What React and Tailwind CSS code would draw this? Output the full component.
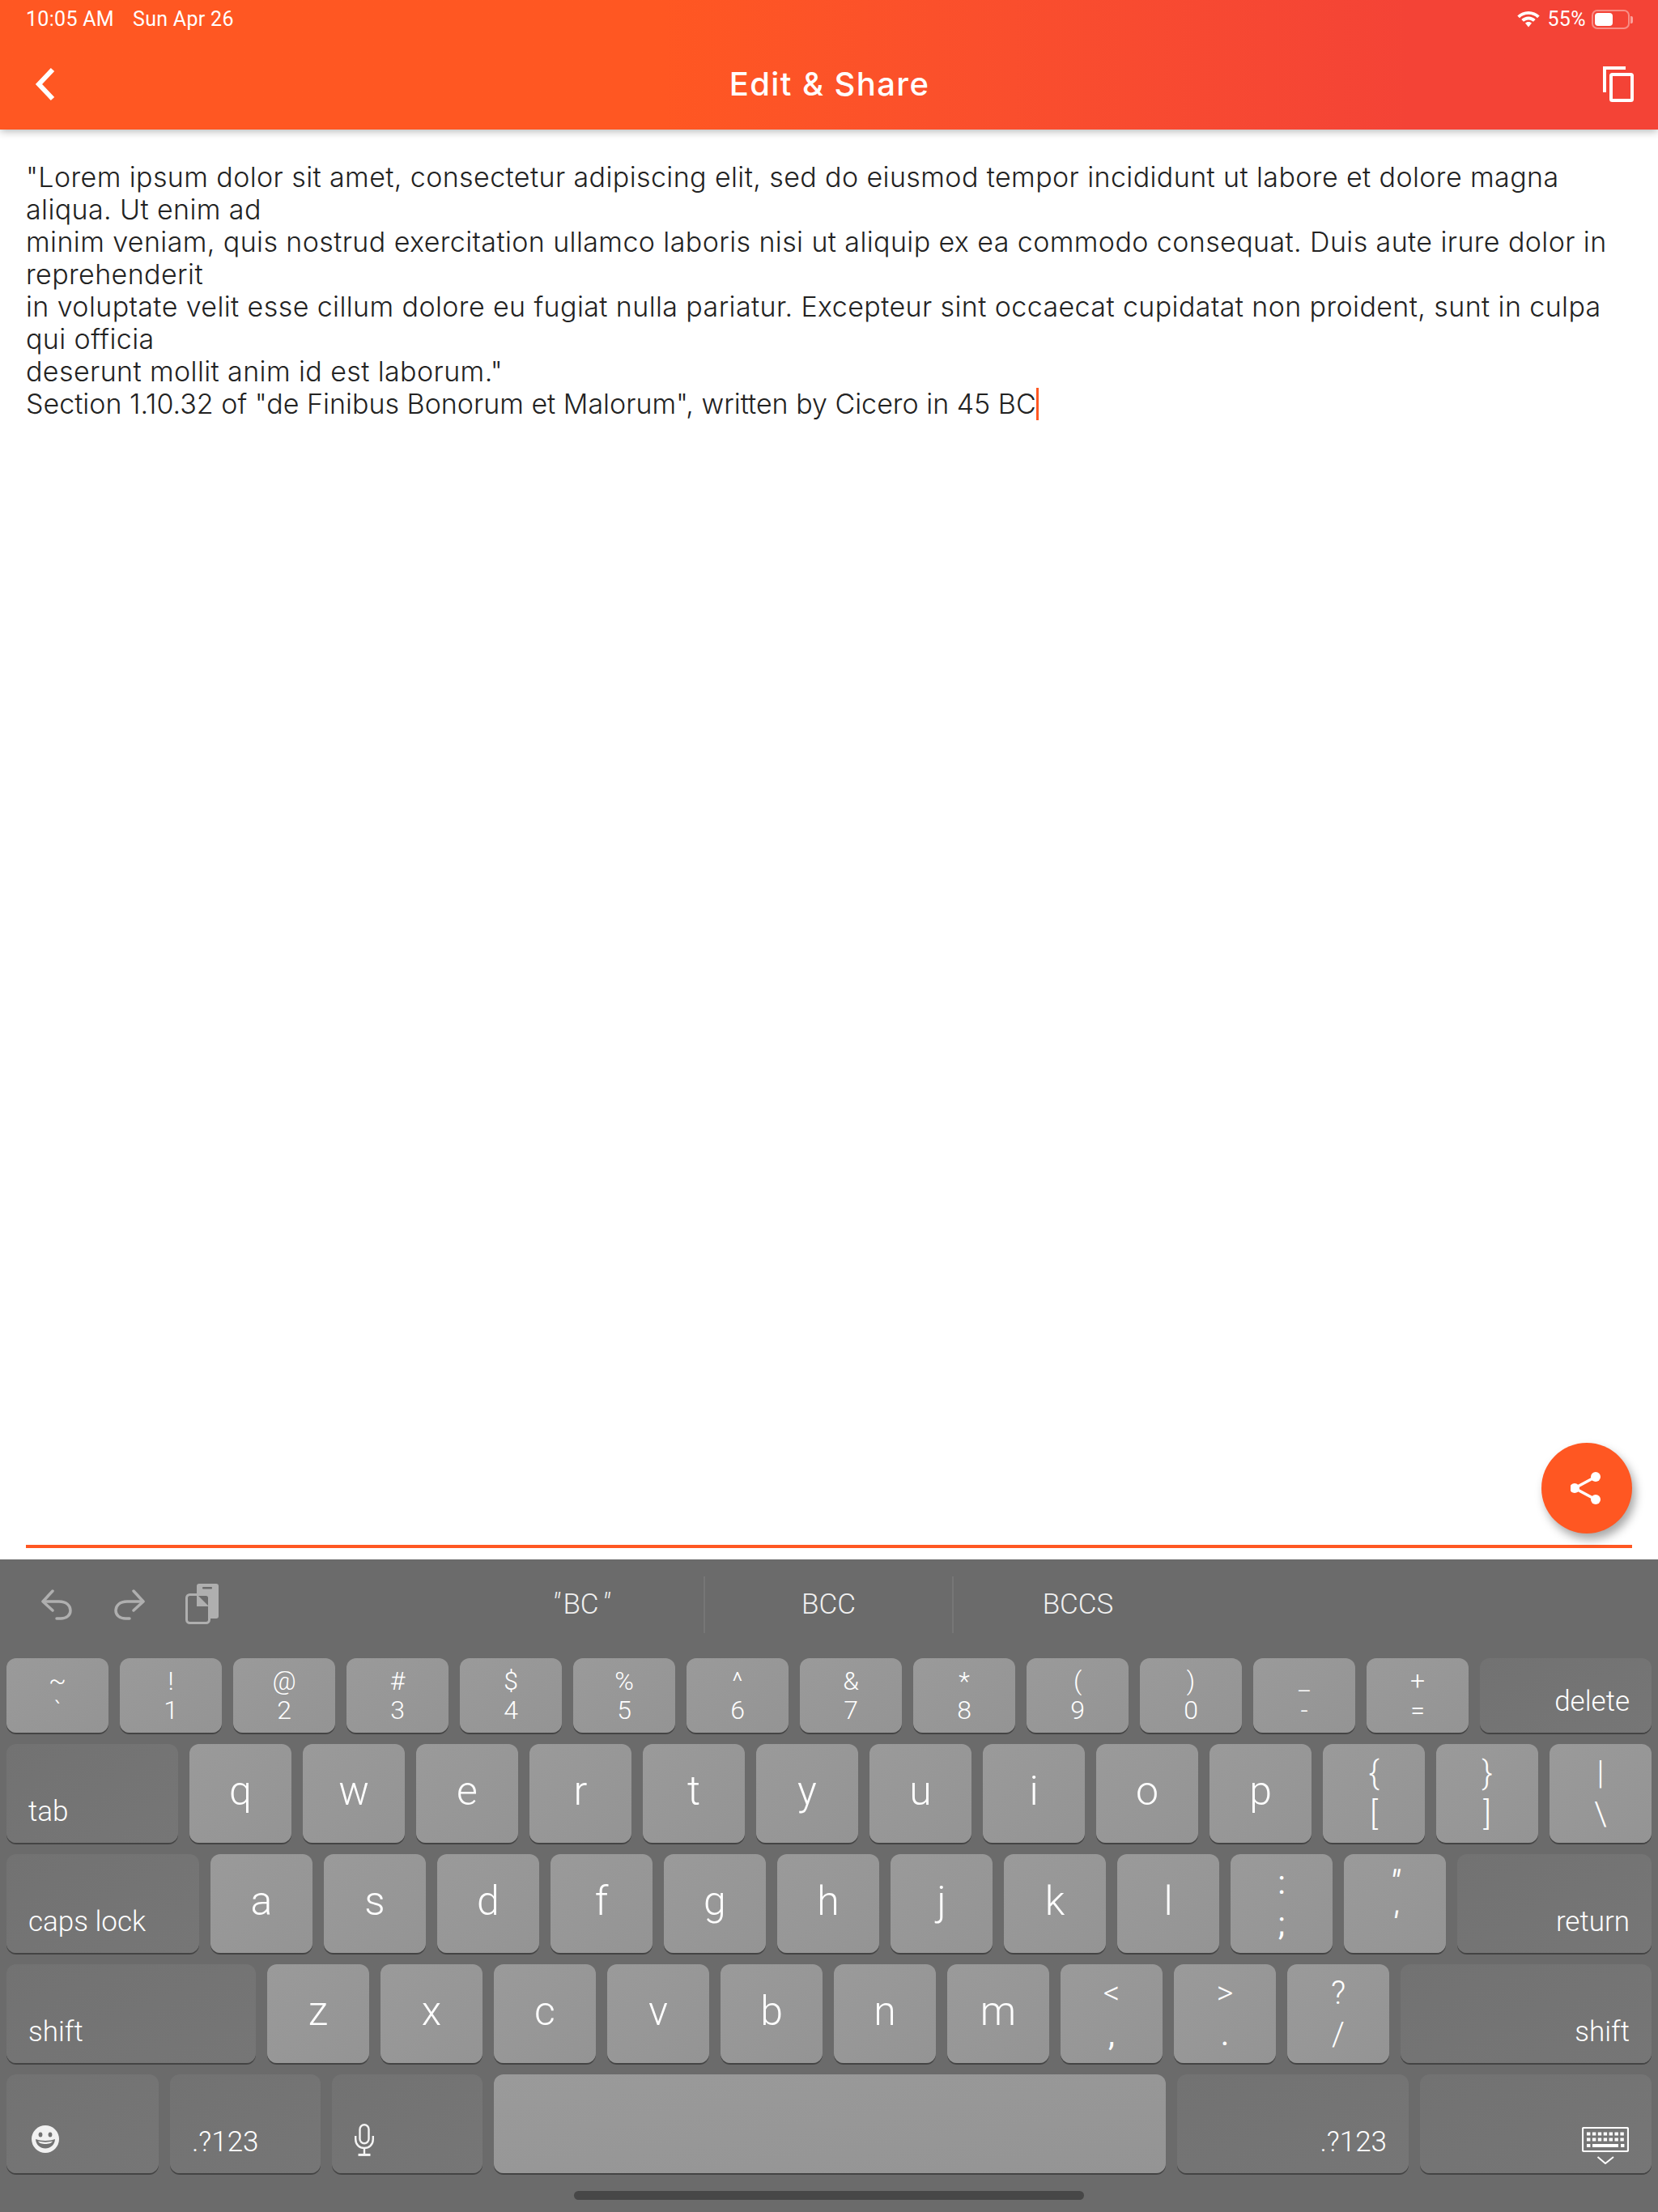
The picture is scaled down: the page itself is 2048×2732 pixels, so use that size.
import React from "react";

const lines = [
  '"Lorem ipsum dolor sit amet, consectetur adipiscing elit, sed do eiusmod tempor incididunt ut labore et dolore magna',
  "aliqua. Ut enim ad",
  "minim veniam, quis nostrud exercitation ullamco laboris nisi ut aliquip ex ea commodo consequat. Duis aute irure dolor in",
  "reprehenderit",
  "in voluptate velit esse cillum dolore eu fugiat nulla pariatur. Excepteur sint occaecat cupidatat non proident, sunt in culpa",
  "qui officia",
  'deserunt mollit anim id est laborum."',
];

function Dual({ top, bottom, small }) {
  return (
    <div className={small
      ? "w-[126px] h-[92px] shrink-0 rounded-[12px] bg-gradient-to-br from-[#9a9a9a] to-[#949494] shadow-[0_2px_0_#444444] flex flex-col items-center justify-center text-[32px] leading-[36px] font-light text-white"
      : "w-[126px] h-[122px] shrink-0 rounded-[12px] bg-gradient-to-br from-[#9a9a9a] to-[#949494] shadow-[0_2px_0_#444444] flex flex-col items-center justify-center text-[40px] leading-[51px] font-light text-white"}>
      <span>{top}</span>
      <span>{bottom}</span>
    </div>
  );
}

function Letter({ c }) {
  return (
    <div className="w-[126px] h-[122px] shrink-0 rounded-[12px] bg-gradient-to-br from-[#9a9a9a] to-[#949494] shadow-[0_2px_0_#444444] flex items-center justify-center pb-[5px] text-[50px] font-light text-white">
      {c}
    </div>
  );
}

const darkKey = "h-[122px] shrink-0 rounded-[12px] bg-gradient-to-br from-[#727272] to-[#767676] shadow-[0_2px_0_#444444] flex items-end px-[27px] pb-[18px] text-[35px] leading-[40px] font-light text-white";

function ChevronBack() {
  return (
    <svg width="28" height="44" viewBox="0 0 28 44" fill="none" className="shrink-0">
      <path d="M24 4 L7 22 L24 40" stroke="#ffffff" strokeWidth="6" />
    </svg>
  );
}

function Wifi() {
  return (
    <svg width="28" height="20" viewBox="0 0 28 20" fill="#ffffff">
      <path d="M14 0C8.6 0 3.8 2.1 0.3 5.6L3 8.3C5.8 5.5 9.7 3.8 14 3.8s8.2 1.7 11 4.5l2.7-2.7C24.2 2.1 19.4 0 14 0z" />
      <path d="M14 6.6c-3.4 0-6.4 1.3-8.7 3.5L8 12.8c1.6-1.5 3.7-2.4 6-2.4s4.4.9 6 2.4l2.7-2.7C20.4 7.9 17.4 6.6 14 6.6z" />
      <path d="M14 13c-1.6 0-3 .6-4 1.6L14 19.5l4-4.9C17 13.6 15.6 13 14 13z" />
    </svg>
  );
}

function Battery() {
  return (
    <div className="flex items-center">
      <div className="w-[47px] h-[24px] rounded-[7px] border-2 border-white/40 p-[2px] flex">
        <div className="w-[22px] h-full rounded-[4px] bg-white" />
      </div>
      <div className="w-[3px] h-[9px] ml-[1px] rounded-r-[2px] bg-white/50" />
    </div>
  );
}

function CopyIcon() {
  return (
    <svg width="38" height="44" viewBox="0 0 38 44" fill="none" stroke="#ffffff" strokeWidth="4">
      <path d="M2 32 V2 H28" />
      <rect x="10" y="10" width="26" height="32" rx="1.5" />
    </svg>
  );
}

function ShareIcon() {
  return (
    <svg width="40" height="40" viewBox="0 0 40 40" fill="#ffffff">
      <path d="M31 6 L5 20 L31 34" fill="none" stroke="#ffffff" strokeWidth="3.5" />
      <circle cx="31" cy="6" r="6" />
      <circle cx="5" cy="20" r="6" />
      <circle cx="31" cy="34" r="6" />
    </svg>
  );
}

function Undo() {
  return (
    <svg width="38" height="38" viewBox="0 0 38 38" fill="none" stroke="#afafaf" strokeWidth="3.5" strokeLinecap="round" strokeLinejoin="round">
      <path d="M14 2 L2 15 L14 26" />
      <path d="M3 15 H22 C31 15 36 20 36 26 C36 32 31 36 24 36 H19" />
    </svg>
  );
}

function Redo() {
  return (
    <svg width="38" height="38" viewBox="0 0 38 38" fill="none" stroke="#afafaf" strokeWidth="3.5" strokeLinecap="round" strokeLinejoin="round">
      <path d="M24 2 L36 15 L24 26" />
      <path d="M35 15 H16 C7 15 2 20 2 26 C2 32 7 36 14 36 H19" />
    </svg>
  );
}

function Paste() {
  return (
    <svg width="41" height="50" viewBox="0 0 41 50" fill="none">
      <path d="M14 3 a3 3 0 0 1 3-3 h21 a3 3 0 0 1 3 3 v37 a3 3 0 0 1-3 3 h-8 V17 L20 13 H14 z" fill="#afafaf" />
      <rect x="21" y="4" width="12" height="2.5" rx="1" fill="#6b6b6b" />
      <rect x="1.5" y="13.5" width="28" height="35" rx="4" stroke="#afafaf" strokeWidth="3" fill="#6b6b6b" />
      <path d="M14 13 V28 H29 z" fill="#afafaf" />
    </svg>
  );
}

function Emoji() {
  return (
    <svg width="34" height="34" viewBox="0 0 34 34">
      <circle cx="17" cy="17" r="17" fill="#f1f1f1" />
      <ellipse cx="11" cy="11.5" rx="2.4" ry="3" fill="#727272" />
      <ellipse cx="23" cy="11.5" rx="2.4" ry="3" fill="#727272" />
      <path d="M5 17 C11 19.5 23 19.5 29 17 C28.5 24.5 23 28.5 17 28.5 C11 28.5 5.5 24.5 5 17z" fill="#727272" />
      <path d="M8 19.5 C13 21 21 21 26 19.5 C25 22 21 23 17 23 C13 23 9 22 8 19.5z" fill="#f1f1f1" />
    </svg>
  );
}

function Mic() {
  return (
    <svg width="24" height="40" viewBox="0 0 24 40" fill="none" stroke="#f4f4f4" strokeWidth="2.4">
      <rect x="6.5" y="1.2" width="11" height="23" rx="5.5" />
      <path d="M1.2 15 V19 C1.2 26 6 30 12 30 C18 30 22.8 26 22.8 19 V15" />
      <path d="M12 30 V38" />
      <path d="M4.5 38.4 H19.5" strokeWidth="3" />
    </svg>
  );
}

function KeyboardIcon() {
  const cells = [];
  for (let r = 0; r < 2; r++) {
    for (let i = 0; i < 7; i++) {
      cells.push(<rect key={`${r}-${i}`} x={6 + i * 6.9} y={6.5 + r * 7} width="4.4" height="4" fill="#ffffff" />);
    }
  }
  return (
    <svg width="58" height="46" viewBox="0 0 58 46" fill="none">
      <rect x="1" y="1" width="56" height="29" rx="1.5" stroke="#ffffff" strokeWidth="2.2" />
      {cells}
      <rect x="6" y="21" width="4.4" height="4" fill="#ffffff" />
      <rect x="13" y="21" width="32" height="4" fill="#ffffff" />
      <rect x="48" y="21" width="4.4" height="4" fill="#ffffff" />
      <path d="M19.5 37 L29 45 L39 37" stroke="#ffffff" strokeWidth="2" />
    </svg>
  );
}

const Mark = ({ c }) => <span className="font-normal">{c}</span>;
const Slant = ({ c }) => <span className="italic font-normal">{c}</span>;

export default function App() {
  return (
    <div className="w-[2048px] h-[2732px] flex flex-col bg-white overflow-hidden font-['Inter']">
      <header className="relative z-10 h-[160px] shrink-0 bg-gradient-to-r from-[#ff5722] from-40% to-[#f44336] to-85% shadow-[0_2px_10px_rgba(0,0,0,0.3)] text-white flex flex-col">
        <div className="h-[48px] px-[32px] flex items-center justify-between font-['Roboto'] text-[25px]">
          <div className="flex gap-[23px] tracking-[0.3px]">
            <span>10:05 AM</span>
            <span>Sun Apr 26</span>
          </div>
          <div className="flex items-center -mr-[1px]">
            <Wifi />
            <span className="ml-[9px] mr-[7px] tracking-[0.4px]">55%</span>
            <Battery />
          </div>
        </div>
        <div className="flex-1 flex items-center justify-between pl-[41px] pr-[30px]">
          <ChevronBack />
          <div className="text-[40px] font-medium tracking-[1.4px]">Edit &amp; Share</div>
          <CopyIcon />
        </div>
      </header>

      <main className="relative flex-1 px-[32px] flex flex-col">
        <div className="flex-1 pt-[39px] text-[34px] leading-[40px] font-light text-[#222222] whitespace-nowrap tracking-[0.4px]">
          {lines.map((l, i) => (
            <div key={i}>{l}</div>
          ))}
          <div className="flex items-center tracking-normal">
            <span>Section 1.10.32 of "de Finibus Bonorum et Malorum", written by Cicero in 45 BC</span>
            <span className="w-[3px] h-[40px] bg-[#ff5722]" />
          </div>
        </div>
        <div className="h-[4px] mb-[14px] bg-[#ff5722]" />
        <button className="absolute right-[32px] top-[1622px] w-[112px] h-[112px] rounded-full bg-[#ff5722] shadow-[4px_7px_12px_rgba(0,0,0,0.35)] flex items-center justify-center">
          <ShareIcon />
        </button>
      </main>

      <section className="h-[806px] shrink-0 bg-[#6b6b6b] font-['Roboto'] text-white flex flex-col">
        <div className="h-[122px] shrink-0 flex items-center pl-[51px] pb-[10px]">
          <div className="flex items-center gap-[52px] w-[515px]">
            <Undo />
            <Redo />
            <div className="-ml-[2px] -mt-[2px]"><Paste /></div>
          </div>
          <div className="flex h-[70px] items-center text-[35px] text-[#f0f0f0] font-light">
            <div className="w-[305px] h-full flex items-center justify-center border-r-2 border-[#767676]">
              <span className="italic mr-[4px]">"</span>BC<span className="italic ml-[4px]">"</span>
            </div>
            <div className="w-[307px] h-full flex items-center justify-center border-r-2 border-[#767676]">BCC</div>
            <div className="w-[307px] h-full flex items-center justify-center">BCCS</div>
          </div>
        </div>

        <div className="flex flex-col gap-[14px] px-[8px]">
          <div className="flex gap-[14px]">
            {[["~","`"],["!","1"],["@","2"],["#","3"],["$","4"],["%","5"],["^","6"],["&","7"],["*","8"],["(","9"],[")","0"],["_","-"],["+","="]].map(([a,b],i)=>(
              <Dual key={i} top={a} bottom={b} small />
            ))}
            <div className="w-[212px] h-[92px] shrink-0 rounded-[12px] bg-gradient-to-br from-[#727272] to-[#767676] shadow-[0_2px_0_#444444] flex items-end justify-end px-[27px] pb-[18px] text-[35px] leading-[40px] font-light text-white">delete</div>
          </div>
          <div className="flex gap-[14px]">
            <div className={`${darkKey} w-[212px]`}>tab</div>
            {"qwertyuiop".split("").map((c)=>(<Letter key={c} c={c} />))}
            <Dual top="{" bottom="[" />
            <Dual top="}" bottom="]" />
            <Dual top="|" bottom="\" />
          </div>
          <div className="flex gap-[14px]">
            <div className={`${darkKey} w-[238px]`}>caps lock</div>
            {"asdfghjkl".split("").map((c)=>(<Letter key={c} c={c} />))}
            <Dual top={<Mark c=":" />} bottom={<Mark c=";" />} />
            <Dual top={<Slant c={'"'} />} bottom={<Slant c={"'"} />} />
            <div className={`${darkKey} w-[240px] justify-end`}>return</div>
          </div>
          <div className="flex gap-[14px]">
            <div className={`${darkKey} w-[308px]`}>shift</div>
            {"zxcvbnm".split("").map((c)=>(<Letter key={c} c={c} />))}
            <Dual top="<" bottom={<Mark c="," />} />
            <Dual top=">" bottom={<Mark c="." />} />
            <Dual top="?" bottom="/" />
            <div className={`${darkKey} w-[310px] justify-end`}>shift</div>
          </div>
          <div className="flex gap-[14px]">
            <div className={`${darkKey} w-[188px] pl-[31px]! pb-[25px]!`}><Emoji /></div>
            <div className={`${darkKey} w-[186px]`}>.?123</div>
            <div className={`${darkKey} w-[186px] pl-[28px]! pb-[21px]!`}><Mic /></div>
            <div className="w-[830px] h-[122px] shrink-0 rounded-[12px] bg-gradient-to-br from-[#9a9a9a] to-[#949494] shadow-[0_2px_0_#444444]" />
            <div className={`${darkKey} w-[286px] justify-end`}>.?123</div>
            <div className={`${darkKey} w-[286px] justify-end pr-[28px]! pb-[11px]!`}><KeyboardIcon /></div>
          </div>
        </div>
        <div className="flex-1 flex items-center justify-center">
          <div className="w-[630px] h-[11px] rounded-full bg-[#474747] mt-[7px]" />
        </div>
      </section>
    </div>
  );
}
